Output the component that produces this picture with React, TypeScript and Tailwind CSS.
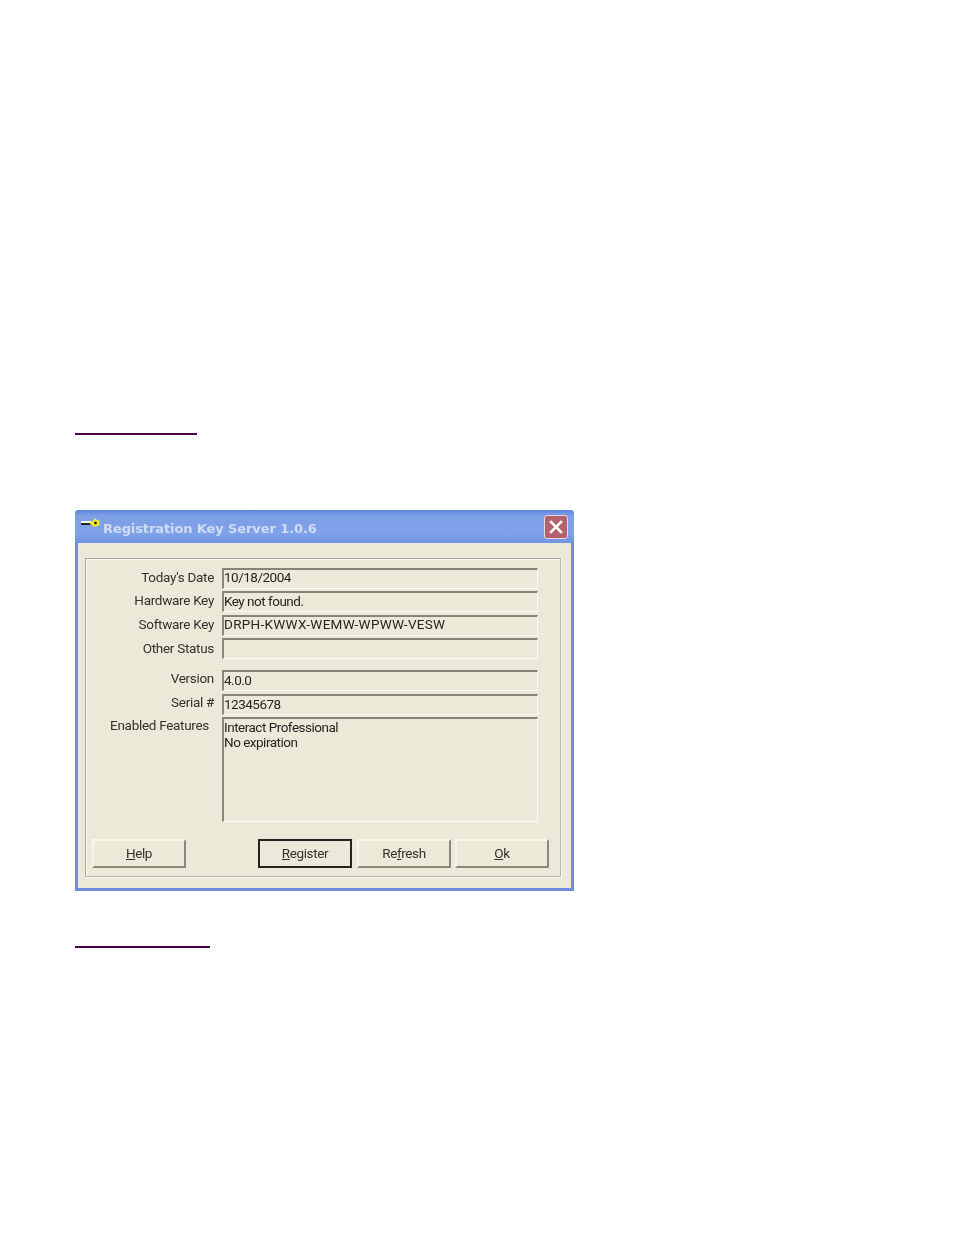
const font = "font-['Roboto',sans-serif]";

function Field({ label, children, h = "h-[21px]", mt = "mt-0", labelPr = "pr-2", labelPt = "pt-0", leading = "leading-[16px]", tracking = "tracking-[-0.5px]", pt = "pt-0" }: { label: string; children?: React.ReactNode; h?: string; mt?: string; labelPr?: string; labelPt?: string; leading?: string; tracking?: string; pt?: string }) {
  return (
    <div className={`flex items-start ${mt}`}>
      <div className={`w-[136px] shrink-0 text-right text-[13.5px] leading-[16px] tracking-[-0.3px] text-[#33332d] ${labelPr} ${labelPt}`}>{label}</div>
      <div className={`w-[316px] ${h} border-t-[2px] border-l-[2px] border-t-[#86847a] border-l-[#8b897c] border-b border-r border-b-[#fbfaf2] border-r-[#fbfaf2] pl-0 text-[13.5px] ${leading} ${tracking} ${pt} text-[#26261f] whitespace-pre-line overflow-hidden`}>
        {children}
      </div>
    </div>
  );
}

function Btn({ children, active = false }: { children: React.ReactNode; active?: boolean }) {
  return (
    <div className={`w-[94px] h-[29px] flex items-center justify-center text-[13.5px] tracking-[-0.4px] text-[#33332d] ${active ? "border-2 border-[#23231f]" : "border-t-2 border-l-2 border-t-[#f8f6ec] border-l-[#f8f6ec] border-r-2 border-b-2 border-r-[#8b897c] border-b-[#8b897c]"}`}>
      <span className="-mt-[1px]">{children}</span>
    </div>
  );
}

export default function App() {
  return (
    <div className={`w-[954px] h-[1235px] bg-white pt-[433px] pl-[75px] ${font}`}>
      <div className="w-[122px] h-[2px] bg-[#470047]" />
      <div className="mt-[75px] w-[499px] h-[381px] flex flex-col rounded-t-[4px] overflow-hidden bg-[#6f8de0] blur-[0.4px]">
        <div className="h-[33px] shrink-0 flex items-center bg-[linear-gradient(180deg,#5f86da_0%,#7d9fe6_18%,#7fa2ea_70%,#6e92e0_100%)] pl-[6px] pr-[6px]">
          <svg width="20" height="14" viewBox="0 0 20 14" className="-mt-[7px]">
            <rect x="0" y="5" width="10" height="2" fill="#ffffff" />
            <rect x="0" y="7" width="10" height="2" fill="#26262a" />
            <path d="M9 6L12 5L14 2L16 4L19 5L18 7L19 9L16 10L13 11L11 9L9 8Z" fill="#f4ee1c" />
            <circle cx="14.5" cy="7" r="1.4" fill="#26262a" />
          </svg>
          <span className="ml-[2px] mt-[5px] font-['DejaVu_Sans',sans-serif] font-bold text-[13px] tracking-[-0.1px] text-[#d0dcf2]">Registration Key Server 1.0.6</span>
          <div className="ml-auto w-[24px] h-[24px] rounded-[3px] bg-[#b3616c] border border-[#e8d5de] flex items-center justify-center">
            <svg width="14" height="14" viewBox="0 0 14 14"><path d="M2 2L12 12M12 2L2 12" stroke="#ffffff" strokeWidth="2.6" strokeLinecap="square" /></svg>
          </div>
        </div>
        <div className="flex-1 mx-[3px] mb-[3px] bg-[#ece9d8] pt-[15px] px-[7px]">
          <div className="w-[476px] h-[319px] border border-t-[#aca899] border-l-[#aca899] border-r-[#b9b6a5] border-b-[#b9b6a5] shadow-[inset_1px_1px_0_#fbfaf2,1px_1px_0_#fbfaf2] pt-[9px] px-0">
            <div className="flex flex-col">
              <Field label="Today's Date" labelPt="pt-[1px]" leading="leading-[14px]">10/18/2004</Field>
              <Field label="Hardware Key" mt="mt-[2px]" labelPt="pt-[1px]">Key not found.</Field>
              <Field label="Software Key" mt="mt-[3px]" labelPt="pt-[1px]" tracking="tracking-[0.3px]" leading="leading-[14px]">DRPH-KWWX-WEMW-WPWW-VESW</Field>
              <Field label="Other Status" mt="mt-[2px]" labelPt="pt-[2px]" />
              <Field label="Version" mt="mt-[11px]">4.0.0</Field>
              <Field label="Serial #" mt="mt-[3px]">12345678</Field>
              <Field label="Enabled Features" h="h-[105px]" mt="mt-[2px]" labelPr="pr-[13px]" leading="leading-[15px]" pt="pt-[1px]">{"Interact Professional\nNo expiration"}</Field>
            </div>
            <div className="mt-[17px] ml-[6px] flex">
              <Btn><u>H</u>elp</Btn>
              <div className="ml-[72px]"><Btn active><u>R</u>egister</Btn></div>
              <div className="ml-[5px]"><Btn>Re<u>f</u>resh</Btn></div>
              <div className="ml-[4px]"><Btn><u>O</u>k</Btn></div>
            </div>
          </div>
        </div>
      </div>
      <div className="mt-[55px] w-[135px] h-[2px] bg-[#470047]" />
    </div>
  );
}
